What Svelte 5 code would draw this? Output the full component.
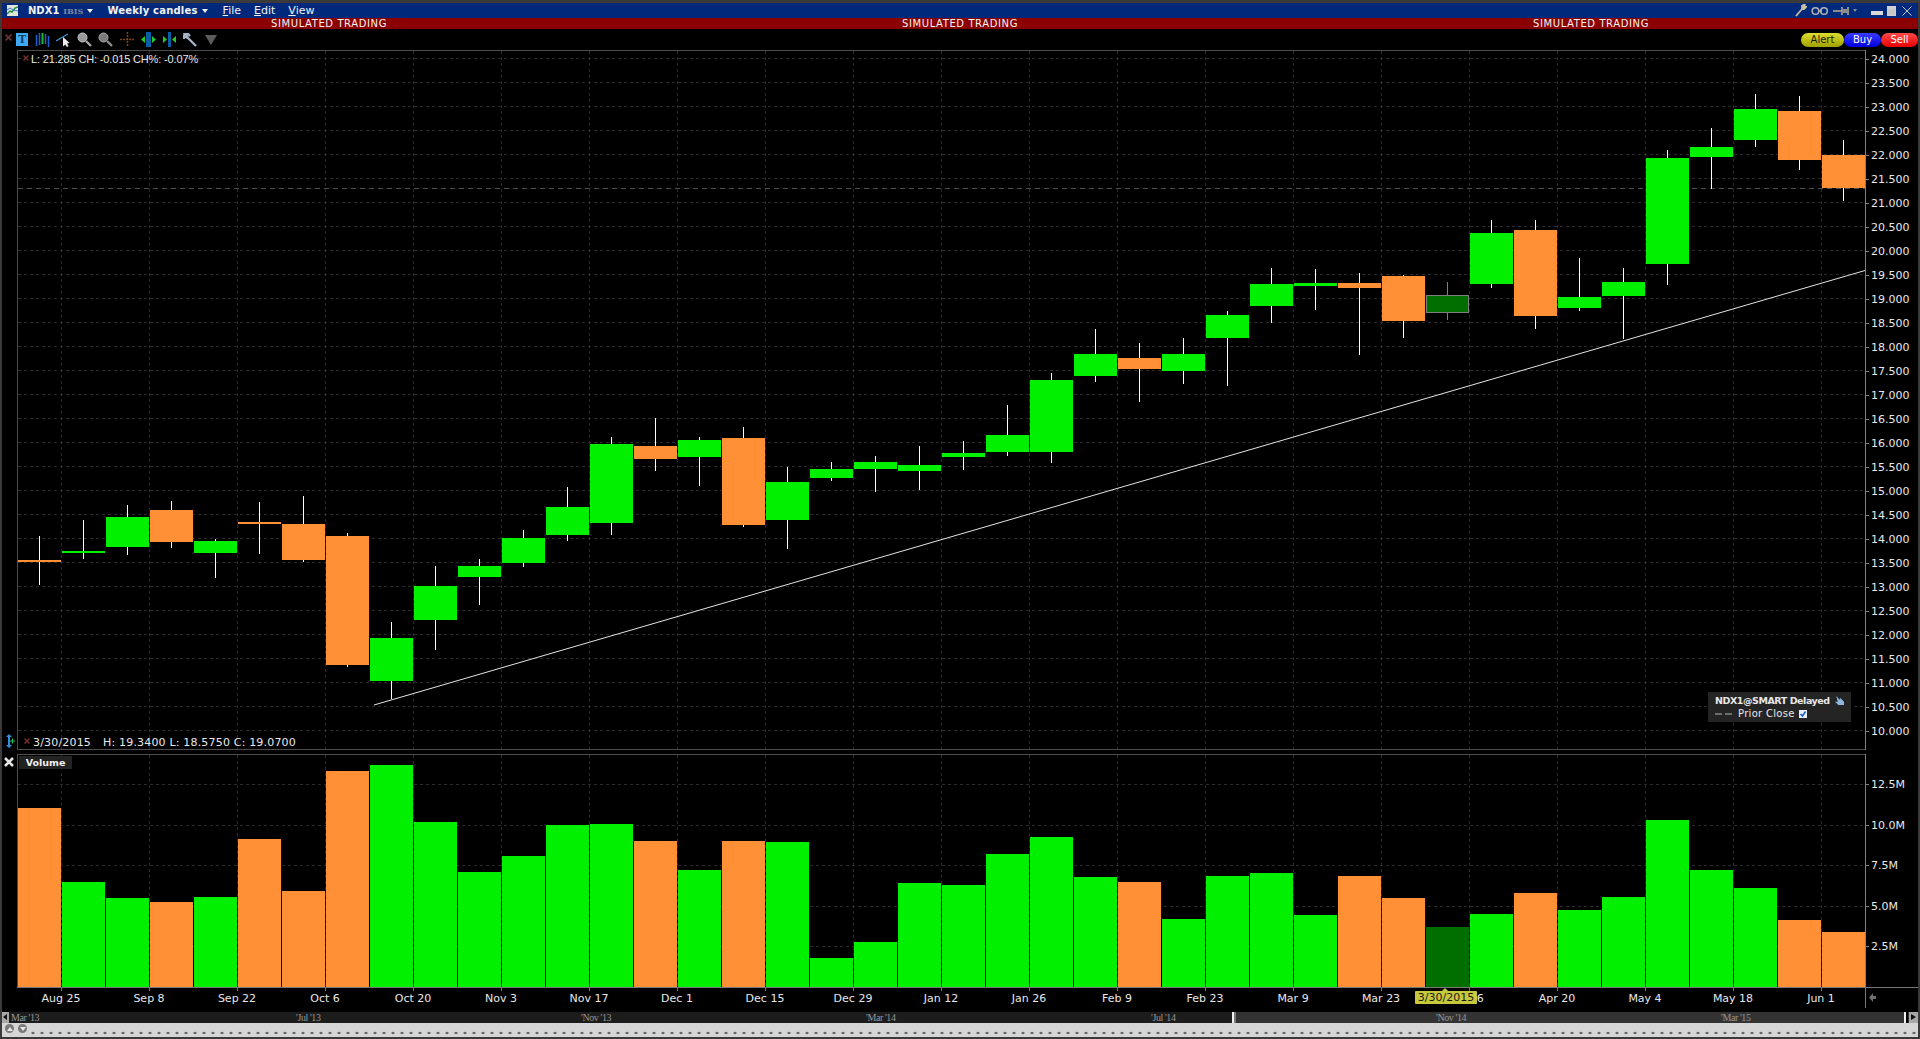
<script>
	// chart coordinates are page pixels, the svg viewBoxes line up with them
	// [high, bodyTop, bodyBottom, low, kind, volume in M]  g = up, o = down, d = selected
	const candles = [
		[536, 560, 562, 585, 'o', 11.14],
		[520, 551, 553, 559, 'g', 6.52],
		[505, 517, 547, 555, 'g', 5.53],
		[501, 510, 542, 548, 'o', 5.3],
		[539, 541, 553, 578, 'g', 5.61],
		[502, 522, 524, 554, 'o', 9.17],
		[496, 524, 560, 562, 'o', 5.98],
		[533, 536, 665, 667, 'o', 13.41],
		[622, 638, 681, 699, 'g', 13.79],
		[566, 586, 620, 650, 'g', 10.23],
		[559, 566, 577, 605, 'g', 7.12],
		[530, 538, 563, 567, 'g', 8.11],
		[487, 507, 535, 541, 'g', 10.08],
		[437, 444, 523, 535, 'g', 10.15],
		[418, 446, 459, 471, 'o', 9.09],
		[437, 440, 457, 486, 'g', 7.27],
		[427, 438, 525, 527, 'o', 9.09],
		[467, 482, 520, 549, 'g', 9.02],
		[462, 469, 478, 481, 'g', 1.82],
		[456, 462, 469, 492, 'g', 2.8],
		[446, 465, 471, 490, 'g', 6.44],
		[441, 453, 457, 470, 'g', 6.36],
		[405, 435, 452, 456, 'g', 8.26],
		[373, 380, 452, 463, 'g', 9.32],
		[329, 354, 376, 382, 'g', 6.82],
		[343, 358, 369, 402, 'o', 6.52],
		[338, 354, 371, 384, 'g', 4.24],
		[311, 315, 338, 386, 'g', 6.89],
		[268, 284, 306, 323, 'g', 7.05],
		[269, 283, 286, 310, 'g', 4.47],
		[273, 283, 288, 355, 'o', 6.89],
		[275, 276, 321, 338, 'o', 5.53],
		[282, 295, 313, 320, 'd', 3.71],
		[220, 233, 284, 288, 'g', 4.55],
		[220, 230, 316, 329, 'o', 5.83],
		[258, 297, 308, 311, 'g', 4.77],
		[268, 282, 296, 339, 'g', 5.61],
		[150, 158, 264, 285, 'g', 10.38],
		[128, 147, 157, 189, 'g', 7.27],
		[94, 109, 140, 147, 'g', 6.14],
		[96, 111, 160, 170, 'o', 4.17],
		[140, 155, 188, 201, 'o', 3.41]
	];

	const colors = { g: '#00f000', o: '#ff9035', d: '#006f00' };

	const prices = [];
	for (let p = 24; p >= 10; p -= 0.5) prices.push(p.toFixed(3));

	const volumeLabels = ['12.5M', '10.0M', '7.5M', '5.0M', '2.5M'];
	const volumeGrid = [784.5, 825.5, 865.5, 906.5, 946.5];
	const dates = [
		'Aug 25', 'Sep 8', 'Sep 22', 'Oct 6', 'Oct 20', 'Nov 3', 'Nov 17', 'Dec 1', 'Dec 15', 'Dec 29', 'Jan 12',
		'Jan 26', 'Feb 9', 'Feb 23', 'Mar 9', 'Mar 23', 'Apr 6', 'Apr 20', 'May 4', 'May 18', 'Jun 1'
	];
	const months = ["Mar '13", "'Jul '13", "'Nov '13", "'Mar '14", "'Jul '14", "'Nov '14", "'Mar '15"];
	const gridX = dates.map((_, i) => 61.5 + 88 * i);
</script>

<div class="window">
	<header class="titlebar">
		<svg class="app-icon" width="11" height="11" viewBox="0 0 11 11">
			<rect width="11" height="11" fill="#dfe8d8" />
			<path d="M0 9 L3 6 L5 7 L8 3 L11 2" stroke="#1f8a3a" stroke-width="1.4" fill="none" />
			<path d="M0 5 L3 3 L6 5 L11 6" stroke="#3b6fd0" fill="none" />
		</svg>
		<span class="symbol">NDX1</span>
		<span class="exchange">IBIS</span>
		<i class="caret"></i>
		<span class="chart-type">Weekly candles</span>
		<i class="caret"></i>
		<nav class="menu">
			<span><u>F</u>ile</span>
			<span><u>E</u>dit</span>
			<span><u>V</u>iew</span>
		</nav>
		<div class="window-tools">
			<svg width="12" height="13" viewBox="0 0 12 13">
				<path d="M1 12 L7 5 M7 5 L7 2 L10 0 L9 3 L11 3 L9 5 Z" stroke="#c9c0a0" stroke-width="1.8" fill="#c9c0a0" />
			</svg>
			<svg width="18" height="10" viewBox="0 0 18 10">
				<circle cx="4.5" cy="5" r="3.3" stroke="#b4b4b4" stroke-width="1.5" fill="none" />
				<circle cx="13" cy="5" r="3.3" stroke="#b4b4b4" stroke-width="1.5" fill="none" />
				<path d="M7 5 H11" stroke="#b4b4b4" stroke-width="1.5" />
			</svg>
			<svg width="16" height="8" viewBox="0 0 16 8">
				<path d="M0 4 H8" stroke="#8c8c8c" stroke-width="2" />
				<path d="M8 0 H10 V2 H14 V0 H16 V8 H14 V6 H10 V8 H8 Z" fill="#8c8c8c" />
			</svg>
			<i class="caret small"></i>
			<span class="win-min"></span>
			<span class="win-max"></span>
			<svg width="10" height="10" viewBox="0 0 10 10">
				<path d="M0.5 0.5 L9.5 9.5 M9.5 0.5 L0.5 9.5" stroke="#c4c4c4" />
			</svg>
		</div>
	</header>

	<div class="simbar">
		<span>SIMULATED TRADING</span>
		<span>SIMULATED TRADING</span>
		<span>SIMULATED TRADING</span>
	</div>

	<div class="toolbar">
		<svg class="close-x" width="7" height="7" viewBox="0 0 7 7">
			<path d="M0.5 0.5 L6.5 6.5 M6.5 0.5 L0.5 6.5" stroke="#6b3434" stroke-width="1.6" />
		</svg>
		<span class="tool-t">T</span>
		<svg width="15" height="14" viewBox="0 0 15 14">
			<path d="M1.5 2 V13 M4.5 0 V12 M10.5 1 V11 M13.5 3 V14" stroke="#1b5fd0" stroke-width="1.5" />
			<path d="M7.5 0 V11" stroke="#18b830" stroke-width="2" />
		</svg>
		<svg width="15" height="14" viewBox="0 0 15 14">
			<path d="M0 8 L12 1" stroke="#3a92cc" stroke-width="1.2" />
			<path d="M7 4 V13.5 L9.2 11.5 L11 14 L12.6 13 L11 10.4 L13.6 10 Z" fill="#efefef" />
		</svg>
		<svg class="glass" width="15" height="15" viewBox="0 0 15 15">
			<circle cx="5.5" cy="5.5" r="4.5" fill="#9a9a9a" stroke="#c8c8c8" />
			<path d="M9 9 L14 14" stroke="#a8a8a8" stroke-width="2.4" />
		</svg>
		<svg class="glass" width="15" height="15" viewBox="0 0 15 15">
			<circle cx="5.5" cy="5.5" r="4.5" fill="#7c7c7c" stroke="#a8a8a8" />
			<path d="M9 9 L14 14" stroke="#8c8c8c" stroke-width="2.4" />
		</svg>
		<svg width="15" height="15" viewBox="0 0 15 15">
			<path d="M7.5 0 V15 M0 7.5 H15" stroke="#80461c" stroke-width="1.5" stroke-dasharray="2 1" />
		</svg>
		<svg width="15" height="15" viewBox="0 0 15 15">
			<rect x="5" y="0" width="5" height="15" fill="#0a5ea8" />
			<path d="M4 4 V11 L0 7.5 Z M11 4 V11 L15 7.5 Z" fill="#28c828" />
		</svg>
		<svg width="15" height="15" viewBox="0 0 15 15">
			<rect x="6" y="0" width="3" height="15" fill="#0a5ea8" />
			<path d="M1 4 V11 L5 7.5 Z M14 4 V11 L10 7.5 Z" fill="#28c828" />
		</svg>
		<svg width="15" height="14" viewBox="0 0 15 14">
			<path d="M13 13 L5 5 M5 5 L2 1 L5 1 L7 3 M5 5 L1 3 L1 6" stroke="#a4b4c4" stroke-width="2.4" fill="none" />
		</svg>
		<svg width="12" height="10" viewBox="0 0 12 10">
			<path d="M0 0 H12 L6 10 Z" fill="#5c5c5c" />
		</svg>
		<div class="order-buttons">
			<button class="alert">Alert</button>
			<button class="buy">Buy</button>
			<button class="sell">Sell</button>
		</div>
	</div>

	<section class="pane main-pane">
		<div class="gutter">
			<svg class="gutter-icon" width="9" height="14" viewBox="0 0 9 14">
				<path d="M3 0 L6 3 H4 V11 H6 L3 14 L0 11 H2 V3 H0 Z" fill="#2f8fd8" />
				<path d="M4 7 H9 M6.5 4.5 V9.5" stroke="#28c060" />
			</svg>
		</div>
		<div class="plot">
			<svg class="chart" width="1847" height="698" viewBox="18 51 1847 698">
				{#each prices as _, i}
					<line class="grid" x1="18" x2="1865" y1={58.5 + 24 * i} y2={58.5 + 24 * i} />
				{/each}
				{#each gridX as x}
					<line class="grid" x1={x} x2={x} y1="51" y2="749" />
				{/each}
				<line class="prior-close" x1="18" x2="1865" y1="188.5" y2="188.5" />
				{#each candles as [high, top, bottom, low, kind], i}
					<line
						x1={39.5 + 44 * i}
						x2={39.5 + 44 * i}
						y1={high}
						y2={low}
						stroke={kind === 'd' ? '#808080' : '#fff'}
					/>
					{#if kind === 'd'}
						<rect
							x={18.5 + 44 * i}
							y={top + 0.5}
							width="42"
							height={bottom - top - 1}
							fill={colors.d}
							stroke="#808080"
						/>
					{:else}
						<rect x={18 + 44 * i} y={top} width="43" height={bottom - top} fill={colors[kind]} />
					{/if}
				{/each}
				<line class="trend" x1="374" y1="705" x2="1865" y2="270.5" />
			</svg>
			<div class="quote-top">
				<svg width="6" height="6" viewBox="0 0 6 6">
					<path d="M0.5 0.5 L5.5 5.5 M5.5 0.5 L0.5 5.5" stroke="#7a3030" stroke-width="1.4" />
				</svg>
				<span>L: 21.285 CH: -0.015 CH%: -0.07%</span>
			</div>
			<div class="quote-bottom">
				<svg width="6" height="6" viewBox="0 0 6 6">
					<path d="M0.5 0.5 L5.5 5.5 M5.5 0.5 L0.5 5.5" stroke="#7a3030" stroke-width="1.4" />
				</svg>
				<span class="quote-date">3/30/2015</span>
				<span>H: 19.3400 L: 18.5750 C: 19.0700</span>
			</div>
			<div class="legend">
				<div class="legend-title">
					<b>NDX1@SMART Delayed</b>
					<svg width="9" height="9" viewBox="0 0 8 8">
						<path d="M1 0 L4.5 3.5 L4.5 1.5 L8 5 L8 8 L3 8 L0 5 L2.5 5 Z" fill="#8fb8e0" />
					</svg>
				</div>
				<div class="legend-row">
					<i class="dash"></i>
					<i class="dash"></i>
					<span>Prior Close</span>
					<svg width="8" height="8" viewBox="0 0 8 8">
						<rect width="8" height="8" fill="#e8eef8" />
						<path d="M1.5 4 L3.5 6 L6.5 1.5" stroke="#1660d0" stroke-width="1.6" fill="none" />
					</svg>
				</div>
			</div>
		</div>
		<div class="axis price-axis">
			{#each prices as price}
				<div class="axis-row">{price}</div>
			{/each}
		</div>
	</section>

	<div class="pane-gap"></div>

	<section class="pane volume-pane">
		<div class="gutter">
			<svg class="pane-close" width="10" height="10" viewBox="0 0 10 10">
				<path d="M1 1 L9 9 M9 1 L1 9" stroke="#e4e4e4" stroke-width="2.6" />
			</svg>
		</div>
		<div class="plot volume-plot">
			<svg class="chart" width="1847" height="232" viewBox="18 755 1847 232">
				{#each volumeGrid as y}
					<line class="grid" x1="18" x2="1865" y1={y} y2={y} />
				{/each}
				{#each gridX as x}
					<line class="grid" x1={x} x2={x} y1="755" y2="987" />
				{/each}
				{#each candles as c, i}
					<rect
						x={18 + 44 * i}
						y={987 - c[5] * 16.1}
						width="43"
						height={c[5] * 16.1}
						fill={colors[c[4]]}
					/>
				{/each}
			</svg>
			<span class="volume-tab">Volume</span>
		</div>
		<div class="axis volume-axis">
			{#each volumeLabels as label}
				<div class="axis-row">{label}</div>
			{/each}
		</div>
	</section>

	<div class="date-axis">
		{#each dates as date}
			<span class="date">{date}</span>
		{/each}
		<span class="corner">
			<svg width="7" height="9" viewBox="0 0 7 9">
				<path d="M0 4.5 L4 0 V3 H7 V6 H4 V9 Z" fill="#707070" />
			</svg>
		</span>
		<span class="date-marker">3/30/2015</span>
	</div>

	<div class="timeline">
		{#each months as month}
			<span class="month">{month}</span>
		{/each}
		<i class="arrow left"></i>
		<i class="handle mid"></i>
		<i class="handle end"></i>
		<i class="arrow right"></i>
	</div>

	<footer class="statusbar">
		<div class="round-buttons">
			<span class="round up"></span>
			<span class="round down"></span>
		</div>
	</footer>
</div>

<style>
	:global(body) {
		margin: 0;
		background: #000;
	}

	.window {
		width: 1920px;
		height: 1039px;
		box-sizing: border-box;
		border: 2px solid #3a3a3a;
		border-top-width: 3px;
		background: #000;
		color: #e8e8e8;
		font-family: 'DejaVu Sans', sans-serif;
		font-size: 11px;
		display: flex;
		flex-direction: column;
		overflow: hidden;
	}

	/* --- title bar --- */
	.titlebar {
		height: 15px;
		flex: none;
		background: #00297c;
		display: flex;
		align-items: center;
		color: #f2f2f2;
	}

	.app-icon {
		margin-left: 5px;
		margin-right: 10px;
	}

	.symbol {
		font-weight: bold;
		font-size: 10px;
	}

	.exchange {
		margin-left: 4px;
		font-family: 'DejaVu Serif', serif;
		font-weight: bold;
		font-size: 8px;
		color: #7e86a0;
	}

	.caret {
		width: 0;
		height: 0;
		border-left: 3.5px solid transparent;
		border-right: 3.5px solid transparent;
		border-top: 4px solid #f0f0f0;
		margin-left: 4px;
	}

	.caret.small {
		border-left-width: 2.5px;
		border-right-width: 2.5px;
		border-top: 3px solid #8c8c8c;
		margin: 0;
	}

	.chart-type {
		margin-left: 14px;
		font-weight: bold;
		font-size: 10px;
		letter-spacing: 0.2px;
	}

	.menu {
		display: flex;
		gap: 13px;
		margin-left: 15px;
		font-size: 11px;
	}

	.window-tools {
		margin-left: auto;
		margin-right: 6px;
		display: flex;
		align-items: center;
		gap: 4px;
	}

	.win-min {
		width: 12px;
		height: 4px;
		margin-left: 10px;
		margin-top: 5px;
		background: #d8d8d8;
	}

	.win-max {
		width: 9px;
		height: 10px;
		box-sizing: border-box;
		border: 1px solid #d0d0d0;
		border-top-width: 3px;
		background: #c8c8c8;
		margin-right: 2px;
	}

	/* --- simulated trading strip --- */
	.simbar {
		height: 11px;
		flex: none;
		background: #8b0000;
		display: flex;
		justify-content: center;
		align-items: center;
	}

	.simbar span {
		width: 631px;
		text-align: center;
		font-size: 10px;
		letter-spacing: 0.6px;
		color: #f4f4f4;
	}

	/* --- chart toolbar --- */
	.toolbar {
		height: 21px;
		flex: none;
		display: flex;
		align-items: center;
		gap: 6.25px;
	}

	.close-x {
		margin-left: 3px;
		margin-right: -2px;
		margin-bottom: 5px;
	}

	.tool-t {
		width: 12px;
		height: 13px;
		background: #3fa9f5;
		color: #123a5c;
		font-family: 'Liberation Serif', serif;
		font-weight: bold;
		font-size: 12px;
		line-height: 13px;
		text-align: center;
	}

	.order-buttons {
		margin-left: auto;
		display: flex;
		align-items: center;
	}

	.order-buttons button {
		height: 14px;
		padding: 0;
		border: none;
		border-radius: 7px;
		font-family: inherit;
		font-size: 10px;
		line-height: 13px;
	}

	.alert {
		width: 43px;
		color: #1a1a00;
		background: linear-gradient(#dede30, #a0a000);
	}

	.buy {
		width: 37px;
		color: #fff;
		background: linear-gradient(#3a3aff, #0000e0);
	}

	.sell {
		width: 37px;
		color: #fff;
		background: linear-gradient(#ff4a4a, #e80000);
	}

	/* --- panes --- */
	.pane {
		display: flex;
		flex: none;
	}

	.main-pane {
		height: 700px;
	}

	.volume-pane {
		height: 233px;
	}

	.pane-gap {
		height: 4px;
		flex: none;
	}

	.gutter {
		width: 15px;
		flex: none;
		position: relative;
	}

	.gutter-icon {
		position: absolute;
		left: 4px;
		bottom: 2px;
	}

	.pane-close {
		position: absolute;
		left: 2px;
		top: 3px;
	}

	.plot {
		width: 1848px;
		flex: none;
		box-sizing: border-box;
		border: 1px solid #4c4c4c;
		border-right: none;
		position: relative;
	}

	.volume-plot {
		border-bottom: none;
	}

	.chart {
		display: block;
	}

	.grid {
		stroke: #2a2a2a;
		stroke-dasharray: 3 3;
		shape-rendering: crispEdges;
	}

	.prior-close {
		stroke: #505050;
		stroke-dasharray: 5 4;
		shape-rendering: crispEdges;
	}

	.chart rect,
	.chart line:not(.trend) {
		shape-rendering: crispEdges;
	}

	.trend {
		stroke: #e4e4e4;
		stroke-width: 1;
	}

	.quote-top,
	.quote-bottom {
		position: absolute;
		display: flex;
		align-items: center;
		white-space: nowrap;
	}

	.quote-top {
		left: 5px;
		top: 0;
		height: 16px;
		gap: 2px;
		font-family: 'Liberation Sans', sans-serif;
		font-size: 11px;
		letter-spacing: -0.15px;
	}

	.quote-bottom {
		left: 6px;
		bottom: -1px;
		height: 15px;
		gap: 3px;
		letter-spacing: 0.18px;
	}

	.quote-top svg,
	.quote-bottom svg {
		margin-bottom: 3px;
	}

	.quote-date {
		margin-right: 9px;
	}

	.legend {
		position: absolute;
		left: 1690px;
		top: 641px;
		width: 143px;
		height: 30px;
		box-sizing: border-box;
		padding: 2px 7px;
		background: #242424;
		font-size: 10px;
		line-height: 13px;
		color: #e8e8e8;
	}

	.legend-title {
		display: flex;
		align-items: center;
		gap: 5px;
		white-space: nowrap;
	}

	.legend-title b {
		font-size: 9.5px;
		letter-spacing: -0.45px;
	}

	.legend-row {
		display: flex;
		align-items: center;
		gap: 1px;
		letter-spacing: 0.3px;
	}

	.legend-row span {
		margin-left: 3px;
		margin-right: 3px;
	}

	.dash {
		width: 7px;
		height: 2px;
		margin-right: 2px;
		background: #6c6c6c;
	}

	.volume-tab {
		position: absolute;
		left: 1px;
		top: 1px;
		width: 53px;
		height: 13px;
		background: #222;
		font-weight: bold;
		font-size: 9.5px;
		line-height: 13px;
		text-align: center;
		color: #f0f0f0;
	}

	/* --- value axes --- */
	.axis {
		flex: none;
		width: 53px;
		box-sizing: border-box;
		border-left: 1px solid #808080;
		overflow: hidden;
	}

	.axis-row {
		padding-left: 5px;
		position: relative;
		white-space: nowrap;
	}

	.axis-row::before {
		content: '';
		position: absolute;
		left: 0;
		top: calc(50% - 1px);
		width: 3px;
		height: 1px;
		background: #808080;
	}

	.price-axis .axis-row {
		height: 24px;
		line-height: 24px;
	}

	.price-axis .axis-row:first-child {
		margin-top: -2.5px;
	}

	.volume-axis {
		padding-top: 11px;
	}

	.volume-axis .axis-row {
		height: 40.5px;
		line-height: 40.5px;
	}

	/* --- date axis --- */
	.date-axis {
		height: 25px;
		flex: none;
		box-sizing: border-box;
		margin-left: 15px;
		border-top: 1px solid #777;
		display: flex;
		position: relative;
	}

	.date {
		width: 88px;
		flex: none;
		position: relative;
		text-align: center;
		line-height: 21px;
	}

	.date::before {
		content: '';
		position: absolute;
		left: 44px;
		top: 0;
		width: 1px;
		height: 3px;
		background: #777;
	}

	.corner {
		height: 21px;
		border-left: 1px solid #777;
		padding-left: 3px;
		display: flex;
		align-items: center;
		margin-top: -1px;
	}

	.date-marker {
		position: absolute;
		left: 1398px;
		top: 3px;
		width: 62px;
		height: 13px;
		background: #c8c83c;
		color: #1a1a1a;
		line-height: 13px;
		text-align: center;
		border-radius: 1px;
	}

	.date-marker::before {
		content: '';
		position: absolute;
		left: 27px;
		top: -3px;
		border-left: 3px solid transparent;
		border-right: 3px solid transparent;
		border-bottom: 3px solid #c8c83c;
	}

	/* --- timeline scrollbar --- */
	.timeline {
		height: 11px;
		flex: none;
		box-sizing: border-box;
		padding-left: 9px;
		display: flex;
		position: relative;
		background: linear-gradient(to right, #1c1c1c 1230px, #333 1230px);
		font-family: 'Liberation Serif', serif;
		font-size: 10px;
		line-height: 11px;
		color: #969696;
	}

	.month {
		width: 285px;
		flex: none;
		letter-spacing: -0.4px;
	}

	.arrow {
		position: absolute;
		top: 0;
		height: 11px;
		width: 9px;
		box-sizing: border-box;
		background: #a8a8a8;
	}

	.arrow::after {
		content: '';
		position: absolute;
		top: 2px;
		border-top: 3.5px solid transparent;
		border-bottom: 3.5px solid transparent;
	}

	.arrow.left {
		left: 0;
		width: 7px;
	}

	.arrow.left::after {
		left: 1px;
		border-right: 4px solid #111;
	}

	.arrow.right {
		right: 0;
	}

	.arrow.right::after {
		left: 2px;
		border-left: 5px solid #111;
	}

	.handle {
		position: absolute;
		top: 0;
		height: 11px;
		width: 2px;
		background: #f0f0f0;
		border-right: 2px solid #777;
	}

	.handle.mid {
		left: 1230px;
	}

	.handle.end {
		right: 10px;
		border-right-color: #000;
	}

	/* --- bottom strip --- */
	.statusbar {
		height: 14px;
		flex: none;
		background-color: #d6d6d6;
		background-image: radial-gradient(circle, #5c5c5c 1px, transparent 1.6px);
		background-size: 9px 14px;
		background-position: -0.5px 3px;
	}

	.round-buttons {
		width: 28px;
		height: 14px;
		background: #d6d6d6;
		display: flex;
		gap: 4px;
		padding-left: 3px;
		box-sizing: border-box;
	}

	.round {
		width: 9px;
		height: 9px;
		margin-top: 1px;
		border-radius: 50%;
		background: #7a7a7a;
		position: relative;
	}

	.round::after {
		content: '';
		position: absolute;
		left: 1.5px;
		top: 2.5px;
		border-left: 3px solid transparent;
		border-right: 3px solid transparent;
	}

	.round.up::after {
		border-bottom: 4px solid #e8e8e8;
	}

	.round.down::after {
		border-top: 4px solid #e8e8e8;
	}
</style>
